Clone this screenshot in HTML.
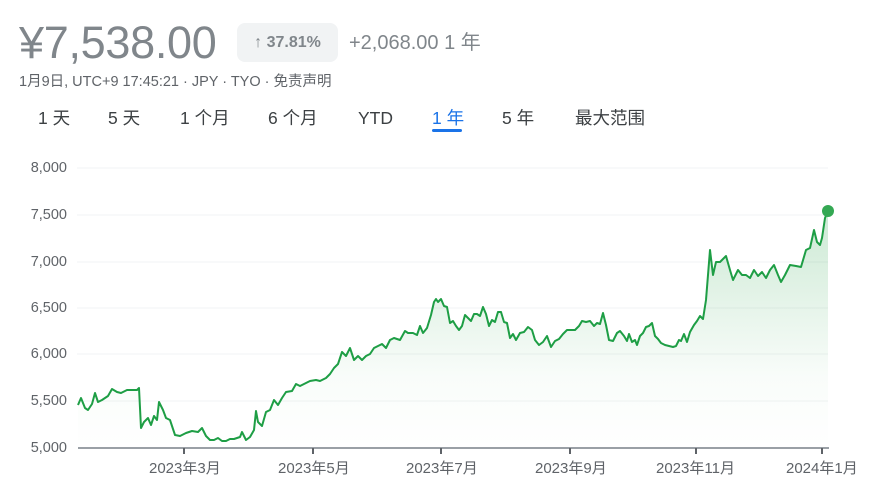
<!DOCTYPE html>
<html><head><meta charset="utf-8"><style>
body{margin:0;background:#fff;width:876px;height:502px;overflow:hidden;font-family:"Liberation Sans","Noto Sans CJK SC",sans-serif;position:relative}
.a{position:absolute;white-space:nowrap}
.price{left:19px;top:17px;font-size:45px;line-height:52px;color:#80868b;letter-spacing:-0.3px}
.badge{left:237px;top:23px;width:101px;height:39px;background:#f1f3f4;border-radius:8px;color:#80868b;font-size:16px;line-height:39px;text-align:center;font-weight:bold}
.chg{left:349px;top:31px;font-size:20px;line-height:24px;color:#80868b}
.sub{left:19px;top:73px;font-size:14.5px;line-height:18px;color:#5f6368}
.tab{top:107px;font-size:17.5px;line-height:22px;color:#3c4043}
.yl{font-size:14.5px;line-height:16px;color:#5f6368;right:809px;text-align:right}
.xl{font-size:15px;line-height:18px;color:#5f6368;top:460px}
</style></head><body>
<div class="a price">¥7,538.00</div>
<div class="a badge">↑ 37.81%</div>
<div class="a chg">+2,068.00 1 年</div>
<div class="a sub">1月9日, UTC+9 17:45:21 · JPY · TYO · 免责声明</div>
<div class="a tab" style="left:38px">1 天</div>
<div class="a tab" style="left:108px">5 天</div>
<div class="a tab" style="left:180px">1 个月</div>
<div class="a tab" style="left:268px">6 个月</div>
<div class="a tab" style="left:358px">YTD</div>
<div class="a tab" style="left:432px;color:#1a73e8">1 年</div>
<div style="position:absolute;left:432px;top:129px;width:30px;height:3px;background:#1a73e8;border-radius:2px"></div>
<div class="a tab" style="left:502px">5 年</div>
<div class="a tab" style="left:575px">最大范围</div>
<div class="a yl" style="top:160px">8,000</div>
<div class="a yl" style="top:207px">7,500</div>
<div class="a yl" style="top:254px">7,000</div>
<div class="a yl" style="top:300px">6,500</div>
<div class="a yl" style="top:346px">6,000</div>
<div class="a yl" style="top:393px">5,500</div>
<div class="a yl" style="top:440px">5,000</div>
<div class="a xl" style="left:149px">2023年3月</div>
<div class="a xl" style="left:278px">2023年5月</div>
<div class="a xl" style="left:406px">2023年7月</div>
<div class="a xl" style="left:535px">2023年9月</div>
<div class="a xl" style="left:656px">2023年11月</div>
<div class="a xl" style="left:786px">2024年1月</div>
<svg class="a" style="left:0;top:0" width="876" height="502">
<defs><linearGradient id="g" x1="0" y1="0" x2="0" y2="1"><stop offset="0" stop-color="#34a853" stop-opacity="0.25"/><stop offset="0.7" stop-color="#34a853" stop-opacity="0.03"/><stop offset="1" stop-color="#34a853" stop-opacity="0"/></linearGradient></defs>
<g stroke="#f1f3f4" stroke-width="1">
<line x1="77" y1="168" x2="828" y2="168"/><line x1="77" y1="215" x2="828" y2="215"/><line x1="77" y1="262" x2="828" y2="262"/><line x1="77" y1="308" x2="828" y2="308"/><line x1="77" y1="354" x2="828" y2="354"/><line x1="77" y1="401" x2="828" y2="401"/>
</g>
<polygon fill="url(#g)" points="78,448 78,405 81,398 85,408 88,410 92,404 95,393 98,402 102,400 108,396 112,389 117,392 121,393 127,390 132,390 137,390 139,388 141,428 144,422 148,418 151,425 154,416 157,420 159,402 163,410 166,418 170,420 175,435 180,436 186,433 192,431 198,432 202,428 206,436 210,440 214,440 218,438 222,441 226,441 230,439 234,439 240,437 242,432 246,440 250,437 254,430 256,411 258,422 262,426 266,412 270,410 274,400 278,405 282,398 286,392 292,391 296,384 300,386 304,384 310,381 316,380 320,381 326,378 330,374 334,368 338,364 342,352 346,356 350,348 354,360 358,356 362,360 366,356 370,354 374,348 378,346 382,344 386,348 390,340 394,338 400,340 405,331 408,333 413,333 417,335 420,326 423,333 427,328 431,315 434,302 436,299 438,302 441,299 444,306 447,307 450,323 453,321 456,326 459,330 462,326 465,315 468,318 471,321 474,314 477,314 480,316 483,307 486,314 489,326 492,320 495,322 498,312 501,312 504,322 507,323 510,338 513,334 516,340 520,333 524,332 528,327 532,330 535,340 539,345 543,342 547,336 551,347 555,341 559,339 563,334 567,330 571,330 575,330 579,326 582,321 586,322 590,321 594,326 597,323 600,324 603,313 606,325 609,340 613,341 617,333 620,331 624,336 627,341 629,334 632,342 635,340 637,345 640,336 643,333 646,327 649,326 652,323 655,336 658,339 661,343 665,345 669,346 673,347 676,346 679,340 681,341 684,334 687,342 690,332 694,325 697,321 700,316 703,319 706,300 710,250 713,275 716,262 720,262 726,256 730,270 733,280 738,270 742,275 746,275 750,278 754,270 758,276 762,272 766,278 770,270 774,265 778,275 781,282 785,275 790,265 796,266 801,267 806,250 810,248 814,230 817,242 820,245 822,238 825,218 828,211 828,448"/>
<polyline fill="none" stroke="#1e9e45" stroke-width="2" stroke-linejoin="round" points="78,405 81,398 85,408 88,410 92,404 95,393 98,402 102,400 108,396 112,389 117,392 121,393 127,390 132,390 137,390 139,388 141,428 144,422 148,418 151,425 154,416 157,420 159,402 163,410 166,418 170,420 175,435 180,436 186,433 192,431 198,432 202,428 206,436 210,440 214,440 218,438 222,441 226,441 230,439 234,439 240,437 242,432 246,440 250,437 254,430 256,411 258,422 262,426 266,412 270,410 274,400 278,405 282,398 286,392 292,391 296,384 300,386 304,384 310,381 316,380 320,381 326,378 330,374 334,368 338,364 342,352 346,356 350,348 354,360 358,356 362,360 366,356 370,354 374,348 378,346 382,344 386,348 390,340 394,338 400,340 405,331 408,333 413,333 417,335 420,326 423,333 427,328 431,315 434,302 436,299 438,302 441,299 444,306 447,307 450,323 453,321 456,326 459,330 462,326 465,315 468,318 471,321 474,314 477,314 480,316 483,307 486,314 489,326 492,320 495,322 498,312 501,312 504,322 507,323 510,338 513,334 516,340 520,333 524,332 528,327 532,330 535,340 539,345 543,342 547,336 551,347 555,341 559,339 563,334 567,330 571,330 575,330 579,326 582,321 586,322 590,321 594,326 597,323 600,324 603,313 606,325 609,340 613,341 617,333 620,331 624,336 627,341 629,334 632,342 635,340 637,345 640,336 643,333 646,327 649,326 652,323 655,336 658,339 661,343 665,345 669,346 673,347 676,346 679,340 681,341 684,334 687,342 690,332 694,325 697,321 700,316 703,319 706,300 710,250 713,275 716,262 720,262 726,256 730,270 733,280 738,270 742,275 746,275 750,278 754,270 758,276 762,272 766,278 770,270 774,265 778,275 781,282 785,275 790,265 796,266 801,267 806,250 810,248 814,230 817,242 820,245 822,238 825,218 828,211"/>
<circle cx="828" cy="211" r="6" fill="#34a853"/>
<line x1="78" y1="448" x2="829" y2="448" stroke="#9aa0a6" stroke-width="2"/>
<g stroke="#5f6368" stroke-width="2">
<line x1="184" y1="448" x2="184" y2="454"/><line x1="313" y1="448" x2="313" y2="454"/><line x1="441" y1="448" x2="441" y2="454"/><line x1="570" y1="448" x2="570" y2="454"/><line x1="696" y1="448" x2="696" y2="454"/><line x1="822" y1="448" x2="822" y2="454"/>
</g>
</svg>
</body></html>
